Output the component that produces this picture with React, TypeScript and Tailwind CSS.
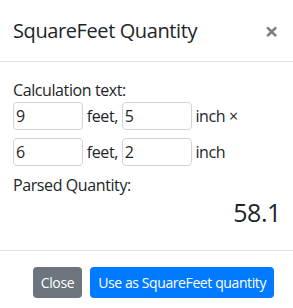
function Field({ value }: { value: string }) {
  return (
    <input
      defaultValue={value}
      className="w-[70px] h-[28px] border border-[#ced4da] rounded px-[2px] outline-none"
    />
  );
}

export default function App() {
  return (
    <div
      className="w-[293px] h-[308px] overflow-hidden bg-white text-[#212529] text-[16px] leading-6 tracking-[-0.025em]"
      style={{ fontFamily: '"Open Sans", "Noto Sans", sans-serif' }}
    >
      <div className="flex items-start justify-between pl-[13px] pr-4 py-4 border-b border-[#dee2e6] h-[62px]">
        <h5 className="text-[20px] leading-[30px] font-medium m-0">SquareFeet Quantity</h5>
        <button className="text-[24px] leading-[30px] font-bold text-[#000] opacity-50 -mr-[1px]">
          ×
        </button>
      </div>
      <div className="px-[13px] pt-4 pb-[23px]">
        <div>Calculation text:</div>
        <div className="flex flex-col gap-2">
          <div className="flex items-center whitespace-pre">
            <Field value="9" />
            <span> feet, </span>
            <Field value="5" />
            <span> inch ×</span>
          </div>
          <div className="flex items-center whitespace-pre">
            <Field value="6" />
            <span> feet, </span>
            <Field value="2" />
            <span> inch</span>
          </div>
        </div>
        <div className="mt-[7px]">Parsed Quantity:</div>
        <div className="text-right text-[25px] leading-[30px] font-medium -mr-[1px]">58.1</div>
      </div>
      <div className="flex justify-end gap-2 border-t border-[#dee2e6] pt-4 pr-[19px]">
        <button className="h-[31px] px-2 rounded bg-[#6c757d] text-white text-[14px] leading-[21px]">
          Close
        </button>
        <button className="h-[31px] px-2 rounded bg-[#007bff] text-white text-[14px] leading-[21px]">
          Use as SquareFeet quantity
        </button>
      </div>
    </div>
  );
}
